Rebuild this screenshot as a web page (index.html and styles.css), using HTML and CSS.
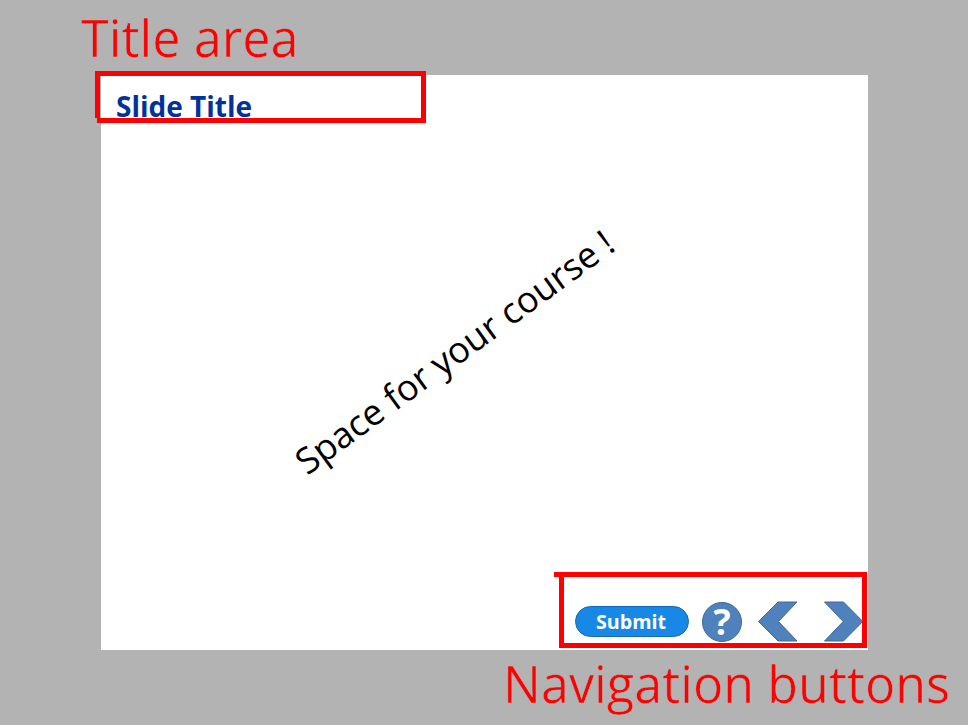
FILE: index.html
```html
<!DOCTYPE html>
<html lang="en">
<head>
<meta charset="utf-8">
<title>Slide layout</title>
<link rel="stylesheet" href="styles.css">
</head>
<body>
<div class="stage">
  <div class="note note-title">Title area</div>
  <main class="slide">
    <h1 class="slide-title">Slide Title</h1>
    <div class="content"><p class="space">Space for your course !</p></div>
    <nav class="controls">
      <button class="submit">Submit</button>
      <button class="help">?</button>
      <button class="arrow prev" aria-label="Previous"><svg width="42" height="42" viewBox="0 0 42 42"><path d="M1.500 21.500 21 2H40L21.500 21.500 40 41H21Z"/></svg></button>
      <button class="arrow" aria-label="Next"><svg width="42" height="42" viewBox="0 0 42 42"><path d="M40.800 21.500 21.500 2H2.500L21.200 21.500 2.500 41H21.500Z"/></svg></button>
    </nav>
  </main>
  <div class="note note-nav">Navigation buttons</div>
  <svg class="outlines" width="968" height="725" viewBox="0 0 968 725">
    <path d="M97.500 118V73.500H423.500V120.500H97"/>
    <path d="M554 574.500H864.500V645.500H561.500V574.500"/>
  </svg>
</div>
</body>
</html>
```
FILE: styles.css
```css
* { box-sizing: border-box; }
body { margin: 0; background: #b3b3b3; font-family: "Open Sans", sans-serif; }
.stage {
  position: relative;
  width: 968px;
  height: 725px;
  overflow: hidden;
  display: flex;
  flex-direction: column;
}
.note {
  height: 75px;
  font-size: 50.300px;
  line-height: 75px;
  font-weight: 400;
  letter-spacing: 0.05px;
  color: #f00;
  /* background-coloured edge slims the strokes */
  -webkit-text-stroke: 0.5px #b3b3b3;
  white-space: nowrap;
}
.note-title { padding-left: 81px; }
.note-nav { padding-left: 503px; line-height: 67px; }
.slide {
  width: 767px;
  height: 575px;
  margin-left: 101px;
  background: #fff;
  display: flex;
  flex-direction: column;
}
.slide-title {
  margin: 0;
  padding: 12px 0 0 15px;
  height: 50px;
  font-size: 28px;
  line-height: 38px;
  font-weight: 700;
  color: #003399;
}
.content {
  flex: 1;
  display: flex;
  align-items: center;
  justify-content: center;
}
.space {
  margin: 0;
  font-size: 36px;
  line-height: 50px;
  color: #000;
  white-space: nowrap;
  transform: translate(-29.500px, -7px) rotate(-36.2deg);
}
.controls {
  display: flex;
  align-items: center;
  justify-content: flex-end;
  height: 58px;
  padding: 0 4px 0 0;
}
button { margin: 0; padding: 0; font-family: inherit; font-weight: 700; color: #fff; }
.submit {
  width: 114px;
  height: 31px;
  margin-right: 13px;
  padding-right: 2px;
  border: 1px solid #1569b0;
  border-radius: 16px;
  background: #1788e6;
  font-size: 19.700px;
  line-height: 29px;
}
.help {
  width: 40px;
  height: 40px;
  margin: 1px 15px 0 0;
  border: 1px solid #40699c;
  border-radius: 50%;
  background: #4f81bd;
  font-size: 36px;
  line-height: 38px;
}
.arrow { width: 42px; height: 42px; border: 0; background: none; }
.prev { margin-right: 23px; }
.arrow svg { display: block; }
.arrow path { fill: #4f81bd; stroke: #40699c; }
.outlines { position: absolute; left: 0; top: 0; pointer-events: none; }
.outlines path { fill: none; stroke: #f00; stroke-width: 5; }
```
